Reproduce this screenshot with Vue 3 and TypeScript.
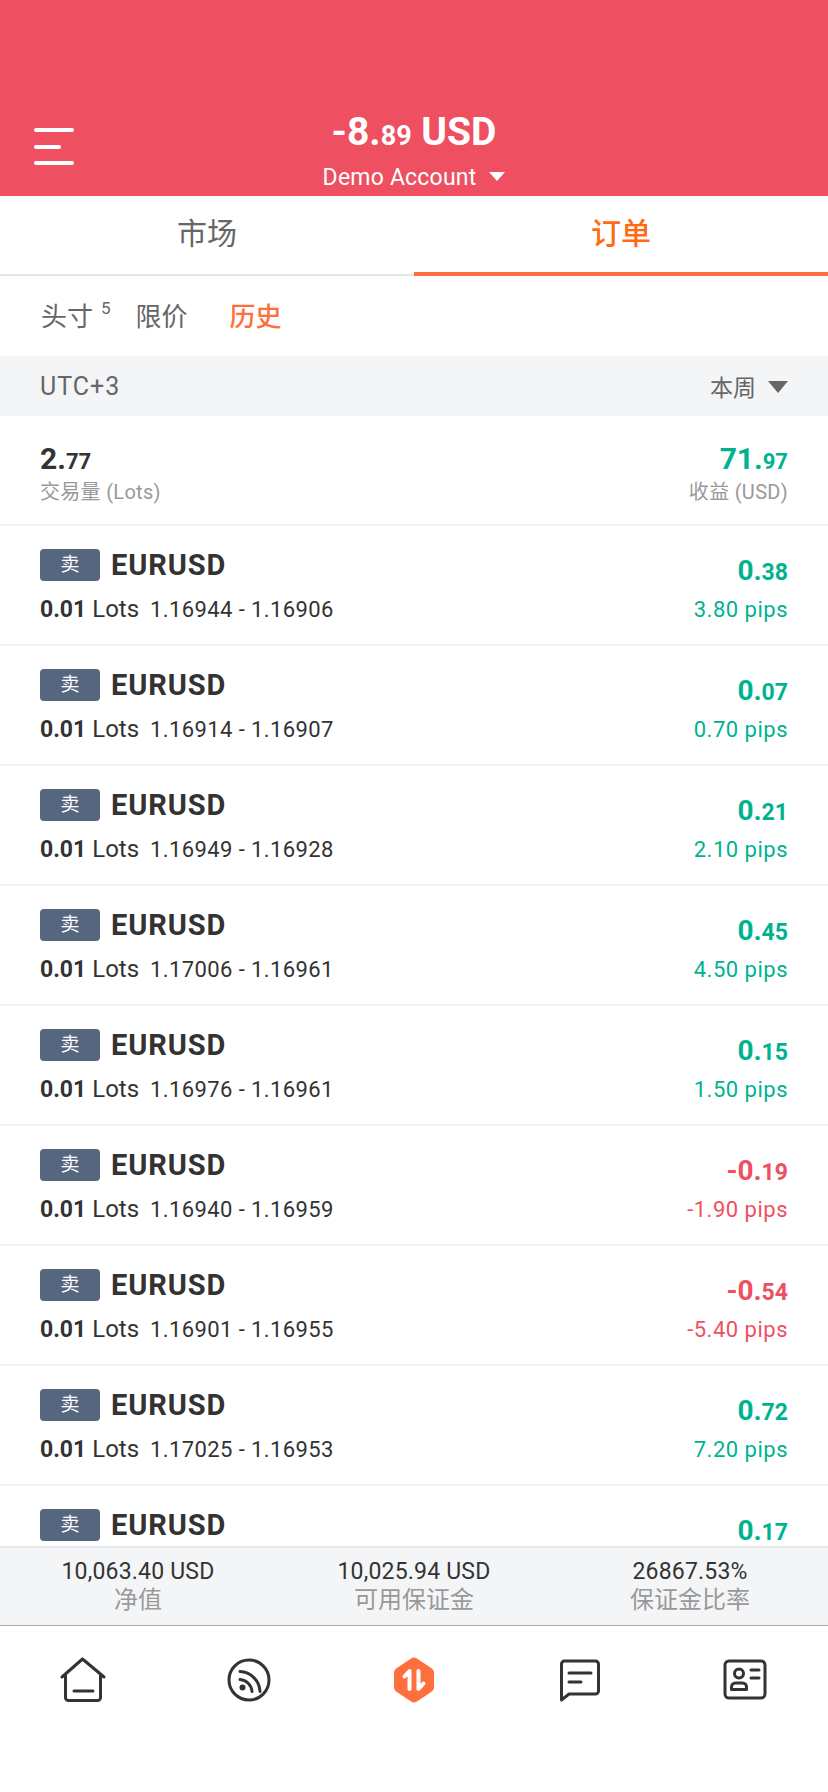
<template>
  <div class="app">
    <header class="top">
      <div class="menu"><span></span><span class="short"></span><span></span></div>
      <div class="balance">-8.<small>89</small> USD</div>
      <div class="account">Demo Account<i class="caret white"></i></div>
    </header>

    <nav class="tabs">
      <div class="tab">市场</div>
      <div class="tab active">订单</div>
    </nav>

    <div class="subtabs">
      <span>头寸<sup>5</sup></span>
      <span>限价</span>
      <span class="on">历史</span>
    </div>

    <div class="filter">
      <span class="utc">UTC+3</span>
      <span class="week">本周<i class="caret grey"></i></span>
    </div>

    <div class="list">
      <div class="summary">
        <div>
          <div class="big">2.<small>77</small></div>
          <div class="cap">交易量 (Lots)</div>
        </div>
        <div class="right">
          <div class="big up">71.<small>97</small></div>
          <div class="cap">收益 (USD)</div>
        </div>
      </div>

      <div v-for="(o, i) in orders" :key="i" class="row">
        <div class="line1">
          <span class="badge">卖</span>
          <span class="symbol">EURUSD</span>
          <span class="profit" :class="o.loss ? 'down' : 'up'">{{ o.whole }}.<small>{{ o.dec }}</small></span>
        </div>
        <div v-if="o.prices" class="line2">
          <span class="lots"><b>0.01</b> Lots</span>
          <span class="prices">{{ o.prices }}</span>
          <span class="pips" :class="o.loss ? 'down' : 'up'">{{ o.pips }} pips</span>
        </div>
      </div>
    </div>

    <div class="stats">
      <div v-for="s in stats" :key="s.label" class="stat">
        <div class="val">{{ s.value }}</div>
        <div class="lab">{{ s.label }}</div>
      </div>
    </div>

    <footer class="bottom">
      <div class="nav-item">
        <svg width="48" height="48" viewBox="0 0 48 48" fill="none" stroke="#333" stroke-width="3" stroke-linecap="round" stroke-linejoin="round">
          <path d="M3 21 23.500 3 45 21" />
          <path d="M6.500 19v22.500a3 3 0 0 0 3 3h29a3 3 0 0 0 3-3V19" />
          <path d="M15 35h19" />
        </svg>
      </div>
      <div class="nav-item">
        <svg width="48" height="48" viewBox="0 0 48 48" fill="none" stroke="#333" stroke-width="3" stroke-linecap="round">
          <circle cx="25" cy="24" r="20" />
          <path d="M16 15.500a21 21 0 0 1 20 20" />
          <path d="M16 23.500a13 13 0 0 1 12 12" />
          <circle cx="18.500" cy="31.500" r="3" fill="#333" stroke="none" />
        </svg>
      </div>
      <div class="nav-item">
        <svg width="48" height="48" viewBox="0 0 48 48" fill="none">
          <path d="M21.500 2.200a5 5 0 0 1 5 0l15 10a5 5 0 0 1 2.500 4v15.600a5 5 0 0 1-2.500 4l-15 10a5 5 0 0 1-5 0l-15-10a5 5 0 0 1-2.500-4V16.200a5 5 0 0 1 2.500-4z" fill="#ff6f3d" />
          <path d="M19.500 33V15l-5 5.500M28.500 15v18l5-5.500" stroke="#fff" stroke-width="4" stroke-linecap="round" stroke-linejoin="round" />
        </svg>
      </div>
      <div class="nav-item">
        <svg width="48" height="48" viewBox="0 0 48 48" fill="none" stroke="#333" stroke-width="3" stroke-linecap="round" stroke-linejoin="round">
          <path d="M8.500 5h31a3 3 0 0 1 3 3v27a3 3 0 0 1-3 3H13l-7.500 6V8a3 3 0 0 1 3-3z" />
          <path d="M13 17h22M13 26h12" />
        </svg>
      </div>
      <div class="nav-item">
        <svg width="48" height="48" viewBox="0 0 48 48" fill="none" stroke="#333" stroke-width="3" stroke-linecap="round" stroke-linejoin="round">
          <rect x="4" y="5" width="40" height="37" rx="4" />
          <circle cx="18" cy="17.500" r="4.500" />
          <path d="M10.500 33.500v-2.500a4 4 0 0 1 4-4h7a4 4 0 0 1 4 4v2.500z" />
          <path d="M30 14h8M30 22h8" />
        </svg>
      </div>
    </footer>
  </div>
</template>

<script setup lang="ts">
interface Order {
  whole: string
  dec: string
  prices?: string
  pips?: string
  loss?: boolean
}

// the last row is cut off by the stats bar, only its first line shows
const orders: Order[] = [
  { whole: '0', dec: '38', prices: '1.16944 - 1.16906', pips: '3.80' },
  { whole: '0', dec: '07', prices: '1.16914 - 1.16907', pips: '0.70' },
  { whole: '0', dec: '21', prices: '1.16949 - 1.16928', pips: '2.10' },
  { whole: '0', dec: '45', prices: '1.17006 - 1.16961', pips: '4.50' },
  { whole: '0', dec: '15', prices: '1.16976 - 1.16961', pips: '1.50' },
  { whole: '-0', dec: '19', prices: '1.16940 - 1.16959', pips: '-1.90', loss: true },
  { whole: '-0', dec: '54', prices: '1.16901 - 1.16955', pips: '-5.40', loss: true },
  { whole: '0', dec: '72', prices: '1.17025 - 1.16953', pips: '7.20' },
  { whole: '0', dec: '17' }
]

const stats = [
  { value: '10,063.40 USD', label: '净值' },
  { value: '10,025.94 USD', label: '可用保证金' },
  { value: '26867.53%', label: '保证金比率' }
]
</script>

<style>
html, body {
  margin: 0;
  background: #fff;
}
</style>

<style scoped>
.app {
  width: 828px;
  height: 1792px;
  display: flex;
  flex-direction: column;
  overflow: hidden;
  font-family: Roboto, "Noto Sans CJK SC", sans-serif;
  color: #333;
}

.top {
  height: 196px;
  flex: none;
  box-sizing: border-box;
  padding-top: 109px;
  background: #ee5062;
  color: #fff;
  text-align: center;
  position: relative;
}
.menu {
  position: absolute;
  left: 34px;
  top: 128px;
  width: 40px;
  height: 37px;
  display: flex;
  flex-direction: column;
  justify-content: space-between;
}
.menu span {
  height: 4px;
  border-radius: 2px;
  background: #fff;
}
.menu .short {
  width: 27px;
}
.balance {
  font-size: 39px;
  font-weight: 700;
  line-height: 46px;
}
.balance small {
  font-size: 27px;
}
.account {
  margin-top: 4px;
  font-size: 23px;
  line-height: 30px;
  letter-spacing: 0.2px;
}
.caret {
  display: inline-block;
  border-style: solid;
  border-color: transparent;
  border-width: 9px 8px 0;
  vertical-align: 4px;
}
.caret.white {
  border-top-color: #fff;
  margin-left: 13px;
}
.caret.grey {
  border-width: 12px 10px 0;
  border-top-color: #666;
  margin-left: 12px;
  vertical-align: 3px;
}

.tabs {
  display: flex;
  height: 80px;
  flex: none;
}
.tab {
  flex: 1;
  box-sizing: border-box;
  text-align: center;
  font-size: 30px;
  line-height: 76px;
  color: #666;
  border-bottom: 2px solid #e6e6e6;
}
.tab.active {
  color: #ff6a13;
  font-weight: 500;
  border-bottom: 4px solid #ff6f3d;
}

.subtabs {
  height: 76px;
  margin-bottom: 4px;
  flex: none;
  box-sizing: border-box;
  padding: 0 41px;
  display: flex;
  align-items: center;
  gap: 42px;
  font-size: 26px;
  color: #666;
}
.subtabs span:first-child {
  margin-right: -17px;
}
.subtabs sup {
  font-size: 17px;
  margin-left: 8px;
  line-height: 0;
  vertical-align: 12px;
}
.subtabs .on {
  color: #ff6f3d;
  font-weight: 500;
}

.filter {
  height: 60px;
  flex: none;
  box-sizing: border-box;
  padding: 0 40px;
  background: #f4f5f7;
  display: flex;
  justify-content: space-between;
  align-items: center;
  font-size: 23px;
  color: #666;
}
.utc {
  font-size: 25px;
  letter-spacing: 1px;
}

.list {
  flex: 1;
  min-height: 0;
  overflow: hidden;
}
.summary {
  height: 110px;
  box-sizing: border-box;
  padding: 26px 40px 0;
  display: flex;
  justify-content: space-between;
  border-bottom: 2px solid #f2f3f5;
}
.right {
  text-align: right;
}
.big {
  font-size: 30px;
  font-weight: 700;
  line-height: 34px;
}
.big small {
  font-size: 22px;
}
.cap {
  font-size: 20px;
  line-height: 26px;
  color: #999;
  letter-spacing: 0.3px;
}
.up {
  color: #00b38f;
}
.down {
  color: #ee5062;
}

.row {
  height: 120px;
  box-sizing: border-box;
  padding: 23px 40px 0;
  border-bottom: 2px solid #f2f3f5;
}
.line1,
.line2 {
  display: flex;
  align-items: center;
}
.line1 {
  height: 32px;
}
.badge {
  width: 60px;
  height: 32px;
  border-radius: 4px;
  background: #57667f;
  color: #fff;
  font-size: 19px;
  line-height: 32px;
  text-align: center;
}
.symbol {
  margin-left: 11px;
  font-size: 29px;
  font-weight: 700;
  letter-spacing: 0.9px;
}
.profit {
  margin-left: auto;
  margin-top: 13px;
  font-size: 28px;
  line-height: 26px;
  font-weight: 700;
}
.profit small {
  font-size: 23px;
}
.line2 {
  margin-top: 13px;
  height: 30px;
}
.lots {
  font-size: 24px;
}
.lots b {
  font-weight: 700;
  font-size: 23px;
}
.prices {
  margin-left: 11px;
  font-size: 22px;
  letter-spacing: 0.4px;
}
.pips {
  margin-left: auto;
  font-size: 22px;
  letter-spacing: 0.5px;
}

.stats {
  height: 80px;
  flex: none;
  box-sizing: border-box;
  display: flex;
  background: #f4f5f7;
  border-top: 2px solid #e9eaec;
  border-bottom: 1px solid #aaa;
}
.stat {
  flex: 1;
  text-align: center;
  padding-top: 10px;
}
.val {
  font-size: 23px;
  line-height: 27px;
  letter-spacing: 0.2px;
}
.lab {
  font-size: 24px;
  line-height: 31px;
  color: #999;
}

.bottom {
  height: 166px;
  flex: none;
  display: flex;
}
.nav-item {
  flex: 1;
  display: flex;
  justify-content: center;
  padding-top: 30px;
}
</style>
